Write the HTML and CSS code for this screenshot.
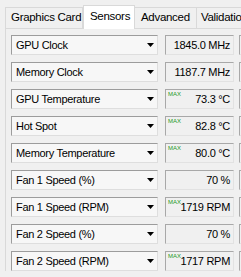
FILE: index.html
```html
<!DOCTYPE html>
<html lang="en">
  <head>
    <meta charset="UTF-8" />
    <title>GPU-Z Sensors</title>
    <link rel="stylesheet" href="styles.css">
  </head>
  <body>
    <div class="tabs">
      <div class="tab tab-card">Graphics Card</div>
      <div class="tab tab-sensors active">Sensors</div>
      <div class="tab tab-adv">Advanced</div>
      <div class="tab tab-valid">Validation</div>
    </div>

    <div class="page">
      <div class="row">
        <div class="sensor"><span>GPU Clock</span><svg class="arrow" width="7" height="4"><polygon points="0,0 7,0 3.5,4" /></svg></div>
        <div class="value">1845.0 MHz</div>
        <div class="graph"></div>
      </div>
      <div class="row">
        <div class="sensor"><span>Memory Clock</span><svg class="arrow" width="7" height="4"><polygon points="0,0 7,0 3.5,4" /></svg></div>
        <div class="value">1187.7 MHz</div>
        <div class="graph"></div>
      </div>
      <div class="row">
        <div class="sensor"><span>GPU Temperature</span><svg class="arrow" width="7" height="4"><polygon points="0,0 7,0 3.5,4" /></svg></div>
        <div class="value"><span class="max">MAX</span>73.3 °C</div>
        <div class="graph"></div>
      </div>
      <div class="row">
        <div class="sensor"><span>Hot Spot</span><svg class="arrow" width="7" height="4"><polygon points="0,0 7,0 3.5,4" /></svg></div>
        <div class="value"><span class="max">MAX</span>82.8 °C</div>
        <div class="graph"></div>
      </div>
      <div class="row">
        <div class="sensor"><span>Memory Temperature</span><svg class="arrow" width="7" height="4"><polygon points="0,0 7,0 3.5,4" /></svg></div>
        <div class="value"><span class="max">MAX</span>80.0 °C</div>
        <div class="graph"></div>
      </div>
      <div class="row">
        <div class="sensor"><span>Fan 1 Speed (%)</span><svg class="arrow" width="7" height="4"><polygon points="0,0 7,0 3.5,4" /></svg></div>
        <div class="value">70 %</div>
        <div class="graph"></div>
      </div>
      <div class="row">
        <div class="sensor"><span>Fan 1 Speed (RPM)</span><svg class="arrow" width="7" height="4"><polygon points="0,0 7,0 3.5,4" /></svg></div>
        <div class="value"><span class="max">MAX</span>1719 RPM</div>
        <div class="graph"></div>
      </div>
      <div class="row">
        <div class="sensor"><span>Fan 2 Speed (%)</span><svg class="arrow" width="7" height="4"><polygon points="0,0 7,0 3.5,4" /></svg></div>
        <div class="value">70 %</div>
        <div class="graph"></div>
      </div>
      <div class="row">
        <div class="sensor"><span>Fan 2 Speed (RPM)</span><svg class="arrow" width="7" height="4"><polygon points="0,0 7,0 3.5,4" /></svg></div>
        <div class="value"><span class="max">MAX</span>1717 RPM</div>
        <div class="graph"></div>
      </div>
    </div>
  </body>
</html>
```

FILE: styles.css
```css
html,
body {
  margin: 0;
  width: 241px;
  height: 277px;
  overflow: hidden;
}
body {
  background-color: #f0f0f0;
  font-family: "Liberation Sans", Arial, sans-serif;
  font-size: 11px;
  letter-spacing: -0.3px;
  color: #000;
}
.tabs {
  display: flex;
  align-items: flex-end;
  height: 28px;
  padding-left: 5px;
  position: relative;
  z-index: 1;
}
.tab {
  flex-shrink: 0;
  box-sizing: border-box;
  height: 21px;
  line-height: 19px;
  padding-left: 5px;
  border: 1px solid #d9d9d9;
  border-bottom: none;
  background-color: #f0f0f0;
  white-space: nowrap;
  font-size: 11.5px;
}
.tab-card {
  width: 78px;
}
.tab-sensors {
  width: 52px;
  padding-left: 6px;
}
.tab-adv {
  width: 62px;
  padding-left: 6px;
}
.tab-valid {
  width: 60px;
  padding-left: 4px;
}
.tab + .tab {
  border-left: none;
}
.tab.active {
  height: 24px;
  line-height: 20px;
  margin-bottom: -1px;
  background-color: #fff;
  border-left: 1px solid #d9d9d9;
  border-right: 1px solid #d9d9d9;
}
.active + .tab {
  border-left: none;
}
.page {
  margin-left: 5px;
  border-top: 1px solid #d9d9d9;
  border-left: 1px solid #d9d9d9;
  padding: 6px 0 0 5px;
  display: flex;
  flex-direction: column;
  gap: 7px;
}
.row {
  display: flex;
  height: 20px;
}
.sensor,
.value,
.graph {
  flex-shrink: 0;
  box-sizing: border-box;
  border: 1px solid;
  height: 20px;
}
.sensor {
  width: 147px;
  display: flex;
  align-items: center;
  justify-content: space-between;
  padding: 0 3px 0 4px;
  background-color: #f7f7f7;
  border-color: #9c9c9c #dedede #dedede #9c9c9c;
}
.arrow polygon {
  fill: #000;
}
.value {
  position: relative;
  width: 69px;
  margin-left: 7px;
  padding-right: 3px;
  text-align: right;
  line-height: 18px;
  background-color: #f0f0f0;
  border-color: #a8a8a8 #e2e2e2 #e2e2e2 #a8a8a8;
}
.max {
  position: absolute;
  left: 2px;
  top: 1px;
  font-size: 6px;
  line-height: 6px;
  letter-spacing: 0;
  color: #1f9a1f;
}
.graph {
  width: 20px;
  margin-left: 5px;
  background-color: #f0f0f0;
  border-color: #a8a8a8 #e2e2e2 #e2e2e2 #a8a8a8;
}
```
